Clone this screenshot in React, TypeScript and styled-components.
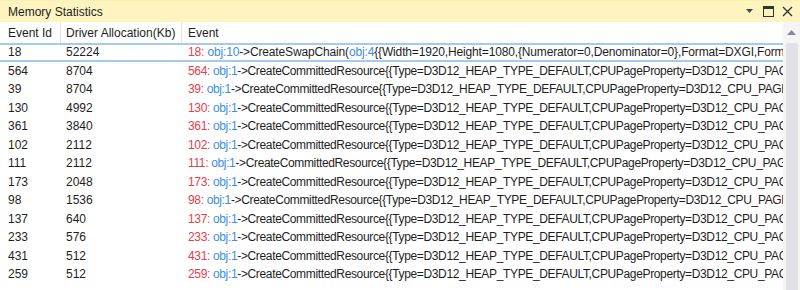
import React from "react";
import styled, { createGlobalStyle } from "styled-components";

const Global = createGlobalStyle`
  html, body { margin: 0; padding: 0; background: #ffffff; }
  body { font-family: "Liberation Sans", "Noto Sans", Arial, sans-serif; font-size: 12px; color: #1e1e1e; }
`;

const Window = styled.div`
  width: 800px;
  height: 290px;
  display: flex;
  flex-direction: column;
  overflow: hidden;
  background: #ffffff;
`;

const TitleBar = styled.div`
  height: 22px;
  flex: 0 0 22px;
  display: flex;
  align-items: center;
  padding: 0 6px 0 8px;
  background: #fdf4c0;
  border-top: 1px solid #fbf0ad;
  box-sizing: border-box;
`;

const Title = styled.div`
  flex: 1;
  font-size: 12px;
  color: #1e1e1e;
`;

const TitleButtons = styled.div`
  display: flex;
  align-items: center;
  gap: 6px;
`;

const IconBtn = styled.span`
  width: 13px;
  height: 13px;
  display: flex;
  align-items: center;
  justify-content: center;
`;

const Body = styled.div`
  flex: 1;
  display: flex;
  min-height: 0;
`;

const Table = styled.div`
  flex: 1;
  display: flex;
  flex-direction: column;
  min-width: 0;
  overflow: hidden;
`;

const HeaderRow = styled.div`
  height: 21px;
  flex: 0 0 21px;
  display: grid;
  grid-template-columns: 61px 121px 1fr;
  align-items: stretch;
`;

const HeaderCell = styled.div<{ $pad: number; $sep?: boolean }>`
  display: flex;
  align-items: center;
  padding-left: ${(p) => p.$pad}px;
  border-right: ${(p) => (p.$sep ? "1px solid #e5e5e5" : "none")};
  white-space: nowrap;
  overflow: hidden;
`;

const Row = styled.div<{ $selected?: boolean }>`
  height: 18.5px;
  flex: 0 0 18.5px;
  display: grid;
  grid-template-columns: 61px 121px 1fr;
  align-items: center;
  box-sizing: border-box;
  border-top: ${(p) => (p.$selected ? "2px solid #a4cbef" : "none")};
  border-bottom: ${(p) => (p.$selected ? "2px solid #a4cbef" : "none")};
`;

const Cell = styled.div<{ $pad: number }>`
  padding-left: ${(p) => p.$pad}px;
  white-space: nowrap;
  overflow: hidden;
`;

const EventCell = styled(Cell)<{ $spacing: number }>`
  letter-spacing: ${(p) => p.$spacing}px;
`;

const Num = styled.span`
  color: #e2414b;
`;

const Obj = styled.span`
  color: #3b8ee0;
`;

const ScrollBar = styled.div`
  width: 17px;
  flex: 0 0 17px;
  background: #f5f5f5;
  display: flex;
  flex-direction: column;
  align-items: center;
`;

const ArrowBox = styled.div`
  height: 17px;
  display: flex;
  align-items: center;
  justify-content: center;
  margin-top: 2px;
`;

const Thumb = styled.div`
  width: 12px;
  flex: 1;
  margin-top: 2px;
  background: #e2e2e6;
`;

type Item = { id: string; alloc: string };

const rows: Item[] = [
  { id: "564", alloc: "8704" },
  { id: "39", alloc: "8704" },
  { id: "130", alloc: "4992" },
  { id: "361", alloc: "3840" },
  { id: "102", alloc: "2112" },
  { id: "111", alloc: "2112" },
  { id: "173", alloc: "2048" },
  { id: "98", alloc: "1536" },
  { id: "137", alloc: "640" },
  { id: "233", alloc: "576" },
  { id: "431", alloc: "512" },
  { id: "259", alloc: "512" },
];

const committed =
  "->CreateCommittedResource{{Type=D3D12_HEAP_TYPE_DEFAULT,CPUPageProperty=D3D12_CPU_PAGE_PROPERTY_UNKNOWN,MemoryPoolPreference=D3D12_MEMORY_POOL_UNKNOWN}}";

export default function App() {
  return (
    <>
      <Global />
      <Window>
        <TitleBar>
          <Title>Memory Statistics</Title>
          <TitleButtons>
            <IconBtn>
              <svg width="8" height="5" viewBox="0 0 8 5">
                <path d="M0 0 H7 L3.5 4 Z" fill="#444" />
              </svg>
            </IconBtn>
            <IconBtn>
              <svg width="11" height="11" viewBox="0 0 11 11">
                <rect x="0.5" y="0.5" width="10" height="10" fill="none" stroke="#333" strokeWidth="1" />
                <rect x="0" y="0" width="11" height="3" fill="#333" />
              </svg>
            </IconBtn>
            <IconBtn>
              <svg width="11" height="11" viewBox="0 0 11 11">
                <path d="M1 1 L10 10 M10 1 L1 10" stroke="#333" strokeWidth="1.4" />
              </svg>
            </IconBtn>
          </TitleButtons>
        </TitleBar>
        <Body>
          <Table>
            <HeaderRow>
              <HeaderCell $pad={8} $sep>Event Id</HeaderCell>
              <HeaderCell $pad={5} $sep>Driver Allocation(Kb)</HeaderCell>
              <HeaderCell $pad={6}>Event</HeaderCell>
            </HeaderRow>
            <Row $selected>
              <Cell $pad={8}>18</Cell>
              <Cell $pad={5}>52224</Cell>
              <EventCell $pad={6} $spacing={-0.15}>
                <Num>18:</Num> <Obj>obj:10</Obj>-&gt;CreateSwapChain(<Obj>obj:4</Obj>
                {"{{Width=1920,Height=1080,{Numerator=0,Denominator=0},Format=DXGI,Format=R8G8B8A8_UNORM}}"}
              </EventCell>
            </Row>
            {rows.map((r) => (
              <Row key={r.id}>
                <Cell $pad={8}>{r.id}</Cell>
                <Cell $pad={5}>{r.alloc}</Cell>
                <EventCell $pad={6} $spacing={-0.35}>
                  <Num>{r.id}:</Num> <Obj>obj:1</Obj>
                  {committed}
                </EventCell>
              </Row>
            ))}
          </Table>
          <ScrollBar>
            <ArrowBox>
              <svg width="9" height="5" viewBox="0 0 9 5">
                <path d="M0 5 L4.5 0 L9 5 Z" fill="#868999" />
              </svg>
            </ArrowBox>
            <Thumb />
          </ScrollBar>
        </Body>
      </Window>
    </>
  );
}
